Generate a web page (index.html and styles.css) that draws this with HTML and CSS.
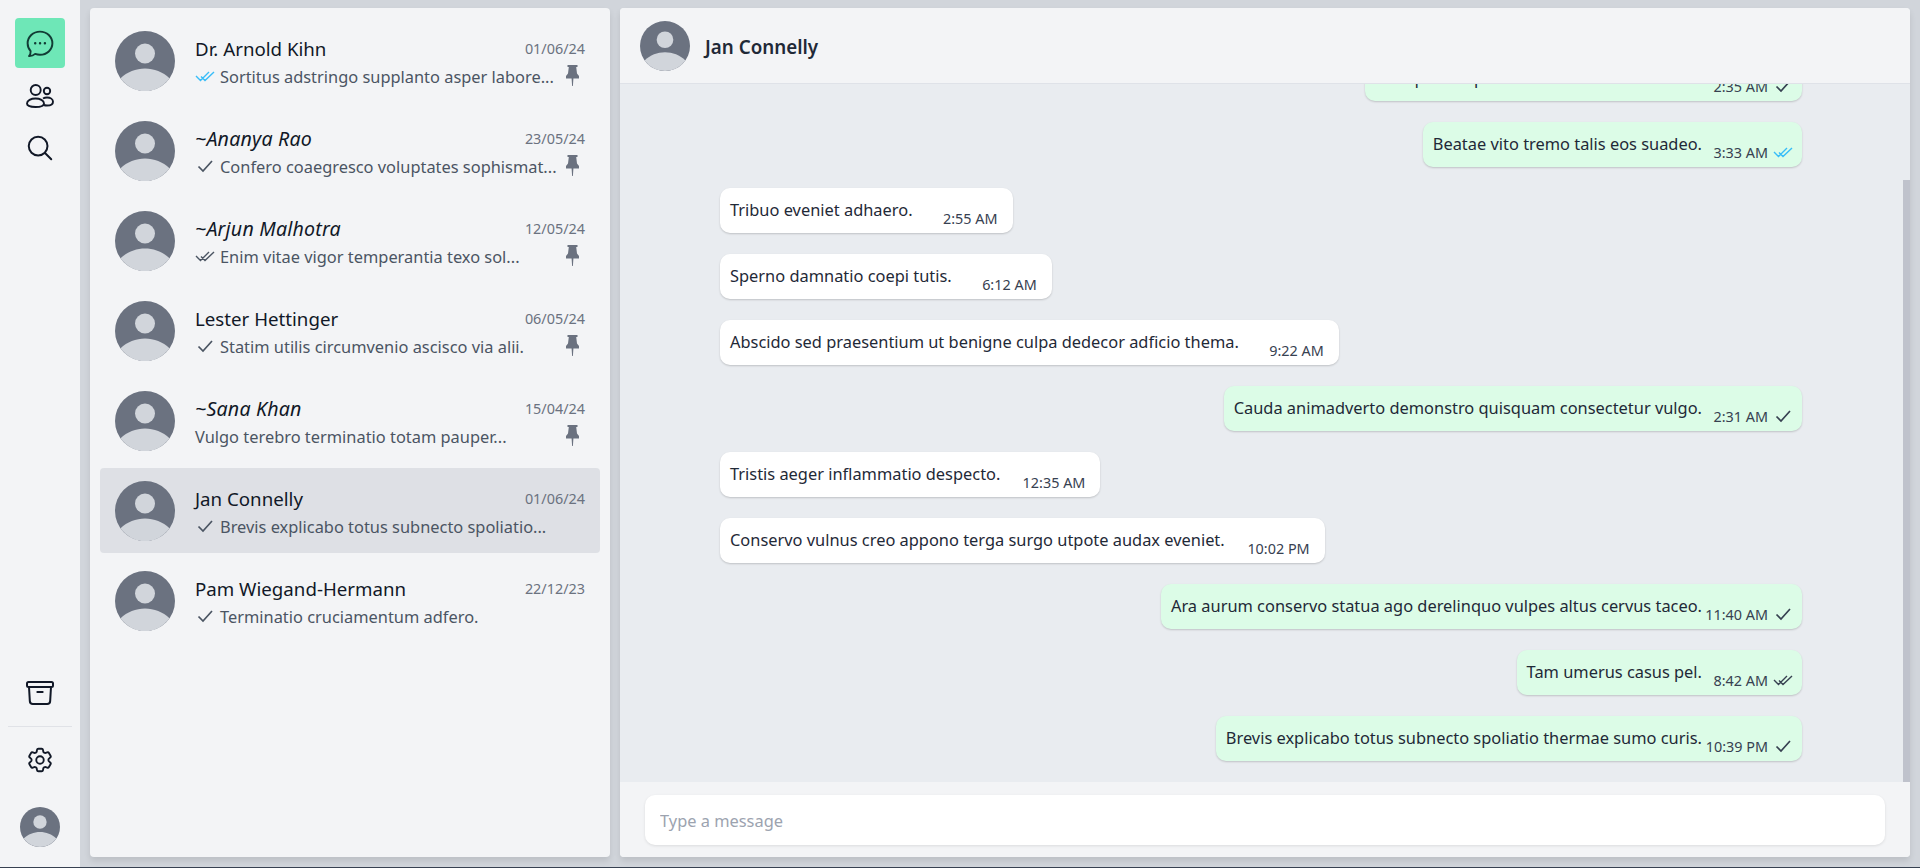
FILE: index.html
```html
<!DOCTYPE html>
<html lang="en">
<head>
    <meta charset="UTF-8">
    <meta name="viewport" content="width=device-width, initial-scale=1.0">
    <title>Chats</title>
    <link rel="stylesheet" href="styles.css">
</head>
<body>
    <svg class="sprite" xmlns="http://www.w3.org/2000/svg">
        <symbol id="avatar" viewBox="0 0 60 60">
            <circle cx="30" cy="30" r="30" fill="#6b7280"/>
            <circle cx="30" cy="22.5" r="10" fill="#d1d5db"/>
            <path d="M5.5 47.3C12 41 21 37.5 30 37.5S48 41 54.5 47.3A30 30 0 0 1 5.5 47.3Z" fill="#d1d5db"/>
        </symbol>
        <symbol id="pin" viewBox="0 0 13 21">
            <path d="M1.5 0H11.5V2H10.2L11 8.5 13 11V13.5H7.4L6.9 21H6.1L5.6 13.5H0V11L2 8.5 2.8 2H1.5Z" fill="currentColor"/>
        </symbol>
        <symbol id="check" viewBox="0 0 20 14">
            <path d="M3.500 7.500 8 12 17 2" fill="none" stroke="currentColor" stroke-width="1.7"/>
        </symbol>
        <symbol id="check-double" viewBox="0 0 20 14">
            <path d="M1 7 5.500 11.500 14 3M6 7.500 10 11.500 19 3M5.500 11.500 7.500 9.500" fill="none" stroke="currentColor" stroke-width="1.400"/>
        </symbol>
    </svg>

    <nav class="rail">
        <div class="rail-top">
            <a class="rail-btn active">
                <svg width="28" height="28" viewBox="0 0 26 26" fill="none" stroke="currentColor" stroke-width="1.800" stroke-linecap="round" stroke-linejoin="round">
                    <path d="M13 1.500C19.400 1.500 24.500 6.300 24.500 12.300S19.400 23 13 23C11.400 23 9.900 22.700 8.500 22.200 7 23.600 5 24.300 2.800 24.200 3.900 23 4.400 21.500 4.300 19.600 2.600 17.700 1.500 15.200 1.500 12.300 1.500 6.300 6.600 1.500 13 1.500Z"/>
                    <path d="M8.500 12.300H8.600M13 12.300H13.100M17.500 12.300H17.600" stroke-width="2.200"/>
                </svg>
            </a>
            <a class="rail-btn">
                <svg width="28" height="26" viewBox="0 0 28 26" fill="none" stroke="currentColor" stroke-width="1.900">
                    <circle cx="9.700" cy="7" r="5"/>
                    <circle cx="21" cy="8" r="3.200"/>
                    <path d="M1 20.500C1 17.500 5 15.500 9.500 15.500 14 15.500 18 17.500 18 20.500 18 23 14 24 9.500 24 5 24 1 23 1 20.500Z"/>
                    <path d="M17 15.500C18.200 14.800 19.600 14.500 21 14.500 24.500 14.500 27 16.300 27 18.700 27 21 24.500 22.500 21 22.500 19.800 22.500 18.700 22.300 17.500 22"/>
                </svg>
            </a>
            <a class="rail-btn">
                <svg width="30" height="30" viewBox="0 0 24 24" fill="none" stroke="currentColor" stroke-width="1.600" stroke-linecap="round" stroke-linejoin="round">
                    <path d="m21 21-5.197-5.197m0 0A7.500 7.500 0 1 0 5.196 5.196a7.500 7.500 0 0 0 10.607 10.607Z"/>
                </svg>
            </a>
        </div>
        <div class="rail-bottom">
            <a class="rail-btn archive">
                <svg width="32" height="32" viewBox="0 0 24 24" fill="none" stroke="currentColor" stroke-width="1.500" stroke-linecap="round" stroke-linejoin="round">
                    <path d="m20.250 7.500-.625 10.632a2.250 2.250 0 0 1-2.247 2.118H6.622a2.250 2.250 0 0 1-2.247-2.118L3.750 7.500M10 11.250h4M3.375 7.500h17.250c.621 0 1.125-.504 1.125-1.125v-1.500c0-.621-.504-1.125-1.125-1.125H3.375c-.621 0-1.125.504-1.125 1.125v1.500c0 .621.504 1.125 1.125 1.125Z"/>
                </svg>
            </a>
            <div class="rail-divider"></div>
            <a class="rail-btn settings">
                <svg width="30" height="30" viewBox="0 0 24 24" fill="none" stroke="currentColor" stroke-width="1.500" stroke-linecap="round" stroke-linejoin="round">
                    <path d="M9.594 3.940c.090-.542.560-.940 1.110-.940h2.593c.550 0 1.020.398 1.110.940l.213 1.281c.063.374.313.686.645.870.074.040.147.083.220.127.325.196.720.257 1.075.124l1.217-.456a1.125 1.125 0 0 1 1.370.490l1.296 2.247a1.125 1.125 0 0 1-.260 1.431l-1.003.827c-.293.241-.438.613-.430.992a7.723 7.723 0 0 1 0 .255c-.008.378.137.750.430.991l1.004.827c.424.350.534.955.260 1.430l-1.298 2.247a1.125 1.125 0 0 1-1.369.491l-1.217-.456c-.355-.133-.750-.072-1.076.124a6.470 6.470 0 0 1-.220.128c-.331.183-.581.495-.644.869l-.213 1.281c-.090.543-.560.940-1.110.940h-2.594c-.550 0-1.019-.398-1.110-.940l-.213-1.281c-.062-.374-.312-.686-.644-.870a6.520 6.520 0 0 1-.220-.127c-.325-.196-.720-.257-1.076-.124l-1.217.456a1.125 1.125 0 0 1-1.369-.490l-1.297-2.247a1.125 1.125 0 0 1 .260-1.431l1.004-.827c.292-.240.437-.613.430-.991a6.932 6.932 0 0 1 0-.255c.007-.380-.138-.751-.430-.992l-1.004-.827a1.125 1.125 0 0 1-.260-1.430l1.297-2.247a1.125 1.125 0 0 1 1.370-.491l1.216.456c.356.133.751.072 1.076-.124.072-.044.146-.086.220-.128.332-.183.582-.495.644-.869l.214-1.280Z"/>
                    <path d="M15 12a3 3 0 1 1-6 0 3 3 0 0 1 6 0Z"/>
                </svg>
            </a>
            <svg class="rail-avatar"><use href="#avatar"/></svg>
        </div>
    </nav>

    <aside class="panel chat-list">
        <div class="chat-item">
            <svg class="avatar"><use href="#avatar"/></svg>
            <div class="chat-info">
                <div class="chat-row"><span class="chat-name">Dr. Arnold Kihn</span><span class="chat-date">01/06/24</span></div>
                <div class="chat-row">
                    <span class="chat-preview"><svg class="tick read"><use href="#check-double"/></svg>Sortitus adstringo supplanto asper labore...</span>
                    <svg class="pin"><use href="#pin"/></svg>
                </div>
            </div>
        </div>
        <div class="chat-item">
            <svg class="avatar"><use href="#avatar"/></svg>
            <div class="chat-info">
                <div class="chat-row"><span class="chat-name unsaved">~Ananya Rao</span><span class="chat-date">23/05/24</span></div>
                <div class="chat-row">
                    <span class="chat-preview"><svg class="tick"><use href="#check"/></svg>Confero coaegresco voluptates sophismat...</span>
                    <svg class="pin"><use href="#pin"/></svg>
                </div>
            </div>
        </div>
        <div class="chat-item">
            <svg class="avatar"><use href="#avatar"/></svg>
            <div class="chat-info">
                <div class="chat-row"><span class="chat-name unsaved">~Arjun Malhotra</span><span class="chat-date">12/05/24</span></div>
                <div class="chat-row">
                    <span class="chat-preview"><svg class="tick"><use href="#check-double"/></svg>Enim vitae vigor temperantia texo sol...</span>
                    <svg class="pin"><use href="#pin"/></svg>
                </div>
            </div>
        </div>
        <div class="chat-item">
            <svg class="avatar"><use href="#avatar"/></svg>
            <div class="chat-info">
                <div class="chat-row"><span class="chat-name">Lester Hettinger</span><span class="chat-date">06/05/24</span></div>
                <div class="chat-row">
                    <span class="chat-preview"><svg class="tick"><use href="#check"/></svg>Statim utilis circumvenio ascisco via alii.</span>
                    <svg class="pin"><use href="#pin"/></svg>
                </div>
            </div>
        </div>
        <div class="chat-item">
            <svg class="avatar"><use href="#avatar"/></svg>
            <div class="chat-info">
                <div class="chat-row"><span class="chat-name unsaved">~Sana Khan</span><span class="chat-date">15/04/24</span></div>
                <div class="chat-row">
                    <span class="chat-preview">Vulgo terebro terminatio totam pauper...</span>
                    <svg class="pin"><use href="#pin"/></svg>
                </div>
            </div>
        </div>
        <div class="chat-item selected">
            <svg class="avatar"><use href="#avatar"/></svg>
            <div class="chat-info">
                <div class="chat-row"><span class="chat-name">Jan Connelly</span><span class="chat-date">01/06/24</span></div>
                <div class="chat-row">
                    <span class="chat-preview"><svg class="tick"><use href="#check"/></svg>Brevis explicabo totus subnecto spoliatio...</span>
                </div>
            </div>
        </div>
        <div class="chat-item">
            <svg class="avatar"><use href="#avatar"/></svg>
            <div class="chat-info">
                <div class="chat-row"><span class="chat-name">Pam Wiegand-Hermann</span><span class="chat-date">22/12/23</span></div>
                <div class="chat-row">
                    <span class="chat-preview"><svg class="tick"><use href="#check"/></svg>Terminatio cruciamentum adfero.</span>
                </div>
            </div>
        </div>
    </aside>

    <main class="panel conversation">
        <header class="conv-header">
            <svg class="conv-avatar"><use href="#avatar"/></svg>
            <span class="conv-name">Jan Connelly</span>
        </header>

        <section class="messages">
            <div class="msg out"><span class="msg-text">Uterque decipio arbor timidus beneficium.</span><span class="msg-meta"><span class="msg-time">2:35 AM</span><svg class="msg-tick dark"><use href="#check"/></svg></span></div>
            <div class="msg out"><span class="msg-text">Beatae vito tremo talis eos suadeo.</span><span class="msg-meta"><span class="msg-time">3:33 AM</span><svg class="msg-tick read"><use href="#check-double"/></svg></span></div>
            <div class="msg in"><span class="msg-text">Tribuo eveniet adhaero.</span><span class="msg-meta"><span class="msg-time">2:55 AM</span></span></div>
            <div class="msg in"><span class="msg-text">Sperno damnatio coepi tutis.</span><span class="msg-meta"><span class="msg-time">6:12 AM</span></span></div>
            <div class="msg in"><span class="msg-text">Abscido sed praesentium ut benigne culpa dedecor adficio thema.</span><span class="msg-meta"><span class="msg-time">9:22 AM</span></span></div>
            <div class="msg out"><span class="msg-text">Cauda animadverto demonstro quisquam consectetur vulgo.</span><span class="msg-meta"><span class="msg-time">2:31 AM</span><svg class="msg-tick dark"><use href="#check"/></svg></span></div>
            <div class="msg in"><span class="msg-text">Tristis aeger inflammatio despecto.</span><span class="msg-meta"><span class="msg-time">12:35 AM</span></span></div>
            <div class="msg in"><span class="msg-text">Conservo vulnus creo appono terga surgo utpote audax eveniet.</span><span class="msg-meta"><span class="msg-time">10:02 PM</span></span></div>
            <div class="msg out"><span class="msg-text">Ara aurum conservo statua ago derelinquo vulpes altus cervus taceo.</span><span class="msg-meta"><span class="msg-time">11:40 AM</span><svg class="msg-tick dark"><use href="#check"/></svg></span></div>
            <div class="msg out"><span class="msg-text">Tam umerus casus pel.</span><span class="msg-meta"><span class="msg-time">8:42 AM</span><svg class="msg-tick dark"><use href="#check-double"/></svg></span></div>
            <div class="msg out"><span class="msg-text">Brevis explicabo totus subnecto spoliatio thermae sumo curis.</span><span class="msg-meta"><span class="msg-time">10:39 PM</span><svg class="msg-tick dark"><use href="#check"/></svg></span></div>
            <div class="scroll-thumb"></div>
        </section>

        <footer class="composer">
            <input class="composer-input" type="text" placeholder="Type a message">
        </footer>
    </main>
</body>
</html>
```

FILE: styles.css
```css
* {
    box-sizing: border-box;
}
html {
    background-color: #374151;
    height: 100%;
}
body {
    margin: 0;
    height: 867px;
    display: flex;
    overflow: hidden;
    font-family: "Noto Sans", sans-serif;
    font-size: 16.4px;
    color: #111827;
    background-color: #d1d5db;
}
.sprite {
    display: none;
}

/* left icon rail */
.rail {
    width: 80px;
    flex-shrink: 0;
    background-color: #f3f4f6;
    display: flex;
    flex-direction: column;
    justify-content: space-between;
    align-items: center;
    padding: 18px 8px 20px;
}
.rail-top {
    display: flex;
    flex-direction: column;
    align-items: center;
    gap: 2px;
}
.rail-top .rail-btn svg,
.rail-btn.archive svg {
    margin-top: 2px;
}
.rail-bottom {
    width: 100%;
    display: flex;
    flex-direction: column;
    align-items: center;
}
.rail-btn {
    width: 50px;
    height: 50px;
    border-radius: 4px;
    display: flex;
    align-items: center;
    justify-content: center;
    color: #111827;
}
.rail-btn.active {
    background-color: #6ee7b7;
    color: #123c35;
}
.rail-divider {
    width: 100%;
    height: 1px;
    margin: 9px 0 8px;
    background-color: #e0e2e7;
}
.rail-avatar {
    width: 40px;
    height: 40px;
    margin-top: 22px;
}

.panel {
    margin-top: 8px;
    height: 849px;
    background-color: #f3f4f6;
    border-radius: 4px;
    box-shadow: 0 4px 6px rgba(0,0,0,0.1);
}

/* chat list */
.chat-list {
    width: 520px;
    flex-shrink: 0;
    margin-left: 10px;
    padding: 10px;
    display: flex;
    flex-direction: column;
    gap: 5px;
}
.chat-item {
    height: 85px;
    display: flex;
    align-items: center;
    gap: 20px;
    padding: 0 15px;
    border-radius: 4px;
}
.chat-item.selected {
    background-color: #dee0e5;
}
.avatar {
    width: 60px;
    height: 60px;
    flex-shrink: 0;
}
.chat-info {
    flex: 1;
    min-width: 0;
    display: flex;
    flex-direction: column;
    gap: 2px;
    margin-top: 3px;
}
.chat-row {
    height: 26px;
    display: flex;
    align-items: center;
    justify-content: space-between;
}
.chat-name {
    font-size: 18.7px;
    color: #111827;
}
.chat-name.unsaved {
    font-style: italic;
    font-size: 19.6px;
    letter-spacing: 0.2px;
}
.chat-date {
    font-size: 14.4px;
    color: #6b7280;
}
.chat-preview {
    display: flex;
    align-items: center;
    white-space: nowrap;
    color: #4b5563;
}
.tick {
    width: 20px;
    height: 14px;
    margin-right: 5px;
    flex-shrink: 0;
    color: #4b5563;
}
.tick.read,
.msg-tick.read {
    color: #38bdf8;
}
.pin {
    width: 13px;
    height: 21px;
    margin-right: 6px;
    margin-top: -2px;
    color: #6b7280;
}

/* conversation */
.conversation {
    width: 1290px;
    flex-shrink: 0;
    margin-left: 10px;
    display: flex;
    flex-direction: column;
    overflow: hidden;
}
.conv-header {
    height: 76px;
    flex-shrink: 0;
    display: flex;
    align-items: center;
    gap: 15px;
    padding: 0 20px;
    position: relative;
    z-index: 1;
    background-color: #f3f4f6;
    border-bottom: 1px solid #dfe2e8;
}
.conv-avatar {
    width: 50px;
    height: 50px;
}
.conv-name {
    font-size: 18.8px;
    font-weight: 600;
    color: #1f2937;
    margin-top: 2px;
}
.messages {
    flex: none;
    height: 698px;
    position: relative;
    overflow: hidden;
    display: flex;
    flex-direction: column;
    justify-content: flex-end;
    gap: 21px;
    padding: 0 108px 21px 100px;
    background-color: #e9ecf0;
}
.msg {
    flex-shrink: 0;
    height: 45px;
    display: flex;
    align-items: flex-start;
    padding: 10px 0 5px 10px;
    border-radius: 10px;
    box-shadow: 0 1px 2px rgba(0,0,0,0.18);
}
.msg.in {
    align-self: flex-start;
    background-color: #ffffff;
}
.msg.out {
    align-self: flex-end;
    background-color: #dcfce7;
}
.msg-text {
    line-height: 23px;
    color: #1f2937;
    white-space: nowrap;
}
.msg-meta {
    width: 100px;
    height: 20px;
    margin-top: 10px;
    padding-right: 15px;
    display: flex;
    align-items: center;
    justify-content: flex-end;
    font-size: 14.4px;
    color: #374151;
}
.msg.out .msg-meta {
    padding-right: 9px;
}
.msg-time {
    white-space: nowrap;
}
.msg-tick {
    width: 20px;
    height: 14px;
    margin-left: 5px;
    flex-shrink: 0;
}
.msg-tick.dark {
    color: #374151;
}
.scroll-thumb {
    position: absolute;
    top: 96px;
    right: 0;
    bottom: 0;
    width: 7px;
    background-color: #bfc2cc;
}

/* message input */
.composer {
    flex: 1;
    padding: 13px 25px 12px;
    background-color: #f3f4f6;
}
.composer-input {
    display: block;
    width: 100%;
    height: 50px;
    padding: 0 15px;
    border: none;
    outline: none;
    border-radius: 10px;
    background-color: #ffffff;
    box-shadow: 0 1px 3px rgba(0,0,0,0.1);
    font-family: inherit;
    font-size: 16.4px;
}
.composer-input::placeholder {
    color: #9ca3af;
}
```
